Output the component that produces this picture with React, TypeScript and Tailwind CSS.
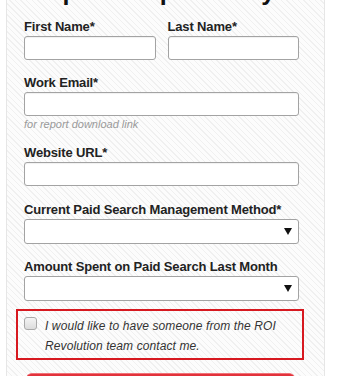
import React from 'react';

const font = { fontFamily: '"Liberation Sans", Arial, sans-serif' };

const Label: React.FC<{ children: React.ReactNode }> = ({ children }) => (
    <label className="block text-[13px] leading-4 font-bold text-[#222] tracking-[-0.15px] mb-[1px]">{children}</label>
);

const TextInput: React.FC = () => (
    <input
        type="text"
        className="block w-full h-[24px] bg-white border border-[#a3a3a3] rounded-[3px] shadow-[inset_0_1px_1px_rgba(0,0,0,0.06)] outline-none"
    />
);

const SelectBox: React.FC = () => (
    <div className="flex items-center justify-end w-full h-[25px] bg-white border border-[#a3a3a3] rounded-[3px] pr-[6px]">
        <svg width="8" height="7" viewBox="0 0 8 7">
            <path d="M0 0 L8 0 L4 7 Z" fill="#111" />
        </svg>
    </div>
);

const App: React.FC = () => {
    return (
        <div className="w-[348px] h-[376px] overflow-hidden bg-white" style={font}>
            <div className="ml-[6px] w-[319px] h-[376px] border-l border-r border-[#e6e6e6] bg-[repeating-linear-gradient(45deg,#fcfcfc_0px,#fcfcfc_3px,#f0f0f0_3px,#f0f0f0_4px)] pl-[17px] pr-[25px] overflow-hidden">
                {/* heading, scrolled out of view above */}
                <div className="h-[6px] overflow-hidden">
                    <h2 className="-mt-[22px] -ml-[17px] text-[25px] leading-[26px] font-bold text-[#111] whitespace-nowrap">
                        Complete Report Daily
                    </h2>
                </div>

                <div className="grid grid-cols-2 gap-x-[12px] mt-[13px]">
                    <div>
                        <Label>First Name*</Label>
                        <TextInput />
                    </div>
                    <div>
                        <Label>Last Name*</Label>
                        <TextInput />
                    </div>
                </div>

                <div className="mt-[15px]">
                    <Label>Work Email*</Label>
                    <TextInput />
                    <p className="text-[11px] leading-[14px] italic text-[#9a9a9a] mt-[1px]">for report download link</p>
                </div>

                <div className="mt-[14px]">
                    <Label>Website URL*</Label>
                    <TextInput />
                </div>

                <div className="mt-[16px]">
                    <Label>Current Paid Search Management Method*</Label>
                    <SelectBox />
                </div>

                <div className="mt-[15px]">
                    <Label>Amount Spent on Paid Search Last Month</Label>
                    <SelectBox />
                </div>

                <div className="-ml-[8px] w-[288px] mt-[8px] border-2 border-[#d71920] flex gap-[8px] pl-[6px] pt-[5px] pb-[2px]">
                    <span className="mt-[1px] shrink-0 w-[13px] h-[13px] rounded-[3px] border border-[#a9a9a9] bg-gradient-to-b from-[#f4f4f4] to-[#dcdcdc]" />
                    <p className="text-[12px] leading-[20px] italic text-[#333] tracking-[0.1px]">
                        I would like to have someone from the ROI Revolution team contact me.
                    </p>
                </div>

                <button className="block ml-[2px] w-[269px] h-[40px] mt-[13px] rounded-md bg-[#e2323b] border-t border-[#f07278]" />
            </div>
        </div>
    );
};

export default App;
